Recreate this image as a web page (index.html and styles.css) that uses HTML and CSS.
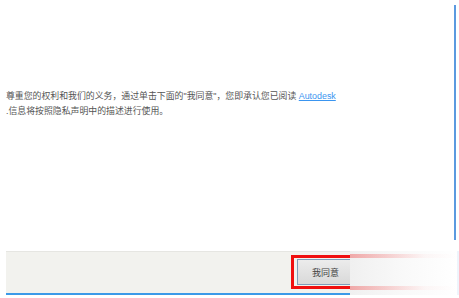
FILE: index.html
```html
<!DOCTYPE html>
<html lang="zh-CN">
<head>
    <meta charset="UTF-8">
    <title>我同意</title>
    <link rel="stylesheet" href="styles.css">
</head>
<body>
    <div class="panel">
        <p class="notice">尊重您的权利和我们的义务，通过单击下面的"我同意"，您即承认您已阅读 <a href="#">Autodesk</a><br>.信息将按照隐私声明中的描述进行使用。</p>
    </div>
    <div class="footer">
        <div class="bar">
            <div class="highlight">
                <button class="agree">我同意</button>
            </div>
        </div>
        <div class="fade"></div>
    </div>
</body>
</html>
```

FILE: styles.css
```css
body {
    margin: 0;
    width: 459px;
    height: 298px;
    overflow: hidden;
    background-color: white;
    font-family: "Liberation Sans", "Noto Sans CJK SC", sans-serif;
    color: #555;
}
.panel {
    margin-top: 5px;
    width: 454px;
    height: 235px;
    border-right: 2px solid #5b9ae0;
}
.notice {
    margin: 0;
    padding: 84px 0 0 6px;
    font-size: 8.9px;
    line-height: 15px;
}
.notice a {
    color: #3a95f0;
}
.footer {
    display: flex;
    margin-top: 11px;
    height: 44px;
}
.bar {
    width: 344px;
    margin-left: 6px;
    box-sizing: border-box;
    background-color: #f2f2ee;
    border-top: 1px solid #e6e6e2;
    border-bottom: 2px solid #3c9ae8;
    padding: 3px 0 0 285px;
}
.highlight {
    height: 27px;
    border: 3px solid #f01010;
    border-right: none;
    padding: 1px 0 0 3px;
}
.agree {
    display: block;
    width: 56px;
    height: 26px;
    padding: 0 0 0 14px;
    text-align: left;
    font-family: "Noto Sans CJK SC", sans-serif;
    font-size: 9px;
    color: #444;
    background: linear-gradient(#ececec, #d9d9d9);
    border: 1px solid #7f9db9;
    border-right: none;
}
.fade {
    flex: 1;
    background:
        linear-gradient(to right, rgba(240, 60, 60, 0.4), rgba(255, 200, 200, 0.12) 70%, rgba(255, 255, 255, 0)) 0 3px / 100% 4px no-repeat,
        linear-gradient(to right, rgba(240, 60, 60, 0.4), rgba(255, 200, 200, 0.12) 70%, rgba(255, 255, 255, 0)) 0 35px / 100% 4px no-repeat,
        linear-gradient(to right, #f0f0f0, #f9f9f9 50%, white);
    border-right: 2px solid #eef4fb;
}
```
